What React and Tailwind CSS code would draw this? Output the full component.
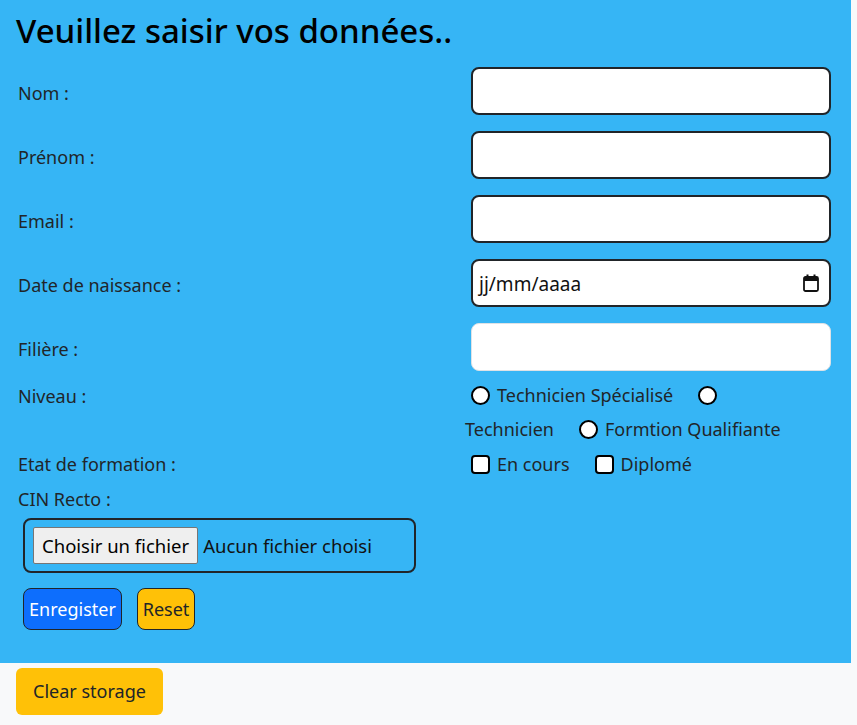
import { useState } from "react";

const fields = [
  { label: "Nom :", name: "nom" },
  { label: "Prénom :", name: "prenom" },
  { label: "Email :", name: "email" },
];

function Radio() {
  return <span className="inline-block w-[19px] h-[19px] rounded-full border-2 border-black bg-white shrink-0" />;
}

function Check() {
  return <span className="inline-block w-[19px] h-[19px] rounded-[4px] border-2 border-black bg-white shrink-0" />;
}

export default function App() {
  const [values, setValues] = useState({ nom: "", prenom: "", email: "", filiere: "" });

  const update = (e) => setValues({ ...values, [e.target.name]: e.target.value });

  return (
    <div className="min-h-screen bg-[#f8f9fa] text-[#212529] font-['Noto_Sans',sans-serif]">
      <div className="w-[851px] bg-[#36b5f5] pb-[33px]">
        <h1 className="pl-4 pt-[7px] h-[67px] text-[33px] font-medium text-black leading-[48px]">
          Veuillez saisir vos données..
        </h1>

        <div className="grid grid-cols-[465px_366px]">
          {fields.map((f) => (
            <div key={f.name} className="contents">
              <label className="pl-[18px] h-[64px] pb-4 pt-[5px] flex items-center text-[18px]">{f.label}</label>
              <div className="pl-[6px] h-[64px] pb-4">
                <input
                  name={f.name}
                  value={values[f.name]}
                  onChange={update}
                  className="w-full h-full rounded-lg border-2 border-[#212529] bg-white px-2 outline-none"
                />
              </div>
            </div>
          ))}

          {/* Date */}
          <label className="pl-[18px] h-[64px] pb-4 pt-[5px] flex items-center text-[18px]">Date de naissance :</label>
          <div className="pl-[6px] h-[64px] pb-4">
            <div className="w-full h-full rounded-lg border-2 border-[#212529] bg-white pl-[6px] pr-[10px] flex items-center justify-between">
              <span className="text-[19px] text-[#111] pt-[3px]">jj/mm/aaaa</span>
              <svg width="16" height="18" viewBox="0 0 16 18" fill="none">
                <rect x="1" y="3" width="14" height="14" rx="1.5" stroke="#111" strokeWidth="1.8" />
                <rect x="1" y="3" width="14" height="4" fill="#111" />
                <rect x="3.5" y="0.5" width="2" height="4" fill="#111" />
                <rect x="10.5" y="0.5" width="2" height="4" fill="#111" />
              </svg>
            </div>
          </div>

          {/* Filière */}
          <label className="pl-[18px] h-[48px] pt-[5px] flex items-center text-[18px]">Filière :</label>
          <div className="pl-[6px] h-[48px]">
            <input
              name="filiere"
              value={values.filiere}
              onChange={update}
              className="w-full h-full rounded-lg border border-[#dee2e6] bg-white px-2 outline-none"
            />
          </div>

          {/* Niveau */}
          <label className="pl-[18px] pt-[13px] text-[18px] leading-[24px]">Niveau :</label>
          <div className="pt-[12px] text-[18px] leading-[24px]">
            <div className="h-[24px] flex items-center pl-[6px]">
              <Radio />
              <span className="ml-[7px]">Technicien Spécialisé</span>
              <span className="ml-[25px] flex"><Radio /></span>
            </div>
            <div className="h-[24px] mt-[10px] flex items-center">
              <span>Technicien</span>
              <span className="ml-[25px] flex"><Radio /></span>
              <span className="ml-[7px]">Formtion Qualifiante</span>
            </div>
          </div>

          {/* Etat */}
          <label className="pl-[18px] pt-[11px] text-[18px] leading-[24px]">Etat de formation :</label>
          <div className="pt-[11px] h-[35px] flex items-center pl-[6px] text-[18px] leading-[24px]">
            <Check />
            <span className="ml-[7px]">En cours</span>
            <span className="ml-[25px] flex"><Check /></span>
            <span className="ml-[7px]">Diplomé</span>
          </div>
        </div>

        <div className="pl-[18px] pt-[11px] text-[18px] leading-[24px]">CIN Recto :</div>
        <div className="ml-[23px] mt-[7px] w-[393px] h-[55px] rounded-lg border-2 border-[#212529] flex items-center pl-[8px]">
          <span className="h-[37px] px-[8px] flex items-center bg-[#efefef] border border-[#767676] rounded-[2px] text-[18.5px] text-black">
            Choisir un fichier
          </span>
          <span className="ml-[5px] text-[18.5px] text-[#111]">Aucun fichier choisi</span>
        </div>

        <div className="flex gap-[15px] ml-[23px] mt-[15px]">
          <button className="h-[42px] w-[99px] bg-[#0d6efd] text-white border border-[#212529] rounded-lg text-[18px]">
            Enregister
          </button>
          <button className="h-[42px] w-[58px] bg-[#ffc107] text-[#212529] border border-[#212529] rounded-lg text-[18px]">
            Reset
          </button>
        </div>
      </div>

      <div className="pl-4 pt-[5px]">
        <button className="h-[47px] w-[147px] bg-[#ffc107] rounded-md text-[18px] text-[#212529]">Clear storage</button>
      </div>
    </div>
  );
}
